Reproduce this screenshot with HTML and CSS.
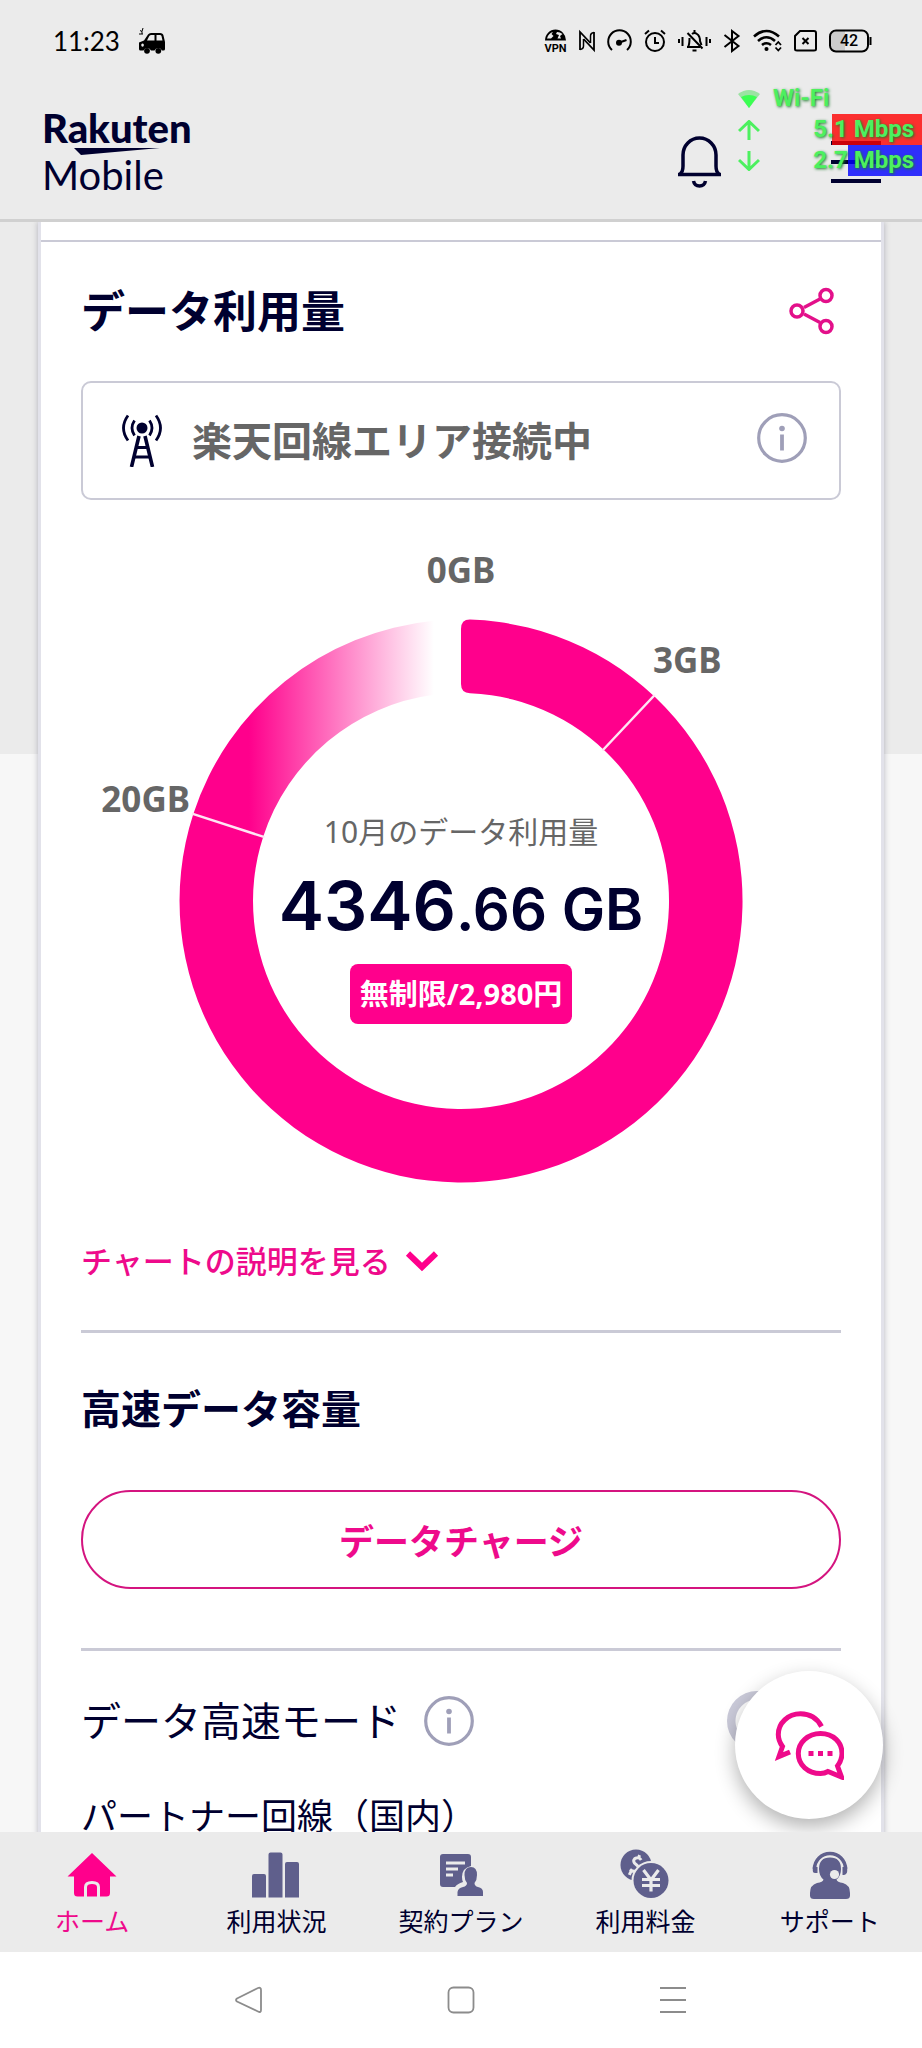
FILE: index.html
```html
<!DOCTYPE html>
<html lang="ja">
<head>
<meta charset="utf-8">
<meta name="viewport" content="width=device-width, initial-scale=1">
<title>my 楽天モバイル</title>
<link rel="stylesheet" href="styles.css">
</head>
<body>
<div class="screen">
  <div class="status">
    <time class="clock">11:23</time>
    <svg class="car" width="26" height="26" viewBox="0 0 26 26"><path fill="#000" fill-rule="evenodd" d="M0 14.500L5 12.500L9 6.500Q10 5 12 5H21Q24 5 24.500 7.500L26 14V21Q26 22.500 24.500 22.500H23A4 4 0 0 0 15.500 22.500H12A4 4 0 0 0 4.500 22.500H1.500Q0 22.500 0 21ZM8 12.500H15.500V7H12Q10.500 7 10 8.500ZM17.500 12.500H23.500L22.500 8Q22.200 7 21 7H17.500ZM3.500 15.500A1.300 1.600 0 1 0 3.600 15.500Z"/><circle cx="8" cy="22.800" r="2.900"/><circle cx="19.300" cy="22.800" r="2.900"/><path d="M0 6H4M1 2.500L3 3.500L4 0M3 3.500V6" stroke="#000" stroke-width="1" fill="none"/></svg>
    <div class="status-icons">
      <svg class="vpn-icon" width="23" height="24" viewBox="0 0 23 24"><path fill="#000" fill-rule="evenodd" d="M1 11.500A10.500 11 0 0 1 22 11.500ZM3 9.500H7L9.500 7L7.500 5L9 3Q4.500 4 3 9.500ZM13 3L12 5L15 6L13.500 9.500H17L16 7L18.500 5Q16 3 13 3Z"/><text x="11.500" y="22.500" text-anchor="middle" class="vpn">VPN</text></svg>
      <svg width="16" height="24" viewBox="0 0 16 24" fill="none" stroke="#000" stroke-width="1.800"><path d="M1 21V3L11.500 14M15 3V21L4.500 10"/><path d="M1 20.500Q4.500 20 4.500 17V10M15 3.500Q11.500 4 11.500 7V14" stroke-width="1.500"/></svg>
      <svg width="25" height="24" viewBox="0 0 25 24" fill="none" stroke="#000" stroke-width="2"><path d="M5 21A11.300 11.300 0 1 1 20 21"/><path d="M12.500 13.500L19.500 11"/><circle cx="12" cy="13.700" r="2" fill="#000"/></svg>
      <svg width="22" height="24" viewBox="0 0 22 24" fill="none" stroke="#000" stroke-width="2"><circle cx="11" cy="13" r="9"/><path d="M11 8V14H15M1 5L5 1.500M21 5L17 1.500"/></svg>
      <svg width="33" height="24" viewBox="0 0 33 24" fill="none" stroke="#000" stroke-width="2"><path d="M1 10V14M4.500 8V17M32 10V14M28.500 8V17M9 18H22M10 18Q11.500 16 11.500 9M14 5Q16.500 3 19 5Q22 7 22 12L23.500 16M16.500 1V4M9.500 4L24.500 19.500M14.500 21.500H18.500"/></svg>
      <svg width="18" height="24" viewBox="0 0 18 24" fill="none" stroke="#000" stroke-width="2"><path d="M1.500 6L15.500 17L9 22V2L15.500 7L1.500 18"/></svg>
      <svg width="29" height="24" viewBox="0 0 29 24" fill="none" stroke="#000" stroke-width="2.600"><path d="M1 7.500Q13.500-3.500 26 7.500M5 12Q13.500 4.500 22 12M9 16Q13.500 12.500 18 16"/><circle cx="13.500" cy="20" r="1.300" fill="#000" stroke-width="1.500"/><path d="M22.500 16L25.300 13L28 16M22.500 18.500L25.300 21.500L28 18.500" stroke-width="1.800"/></svg>
      <svg width="23" height="24" viewBox="0 0 23 24" fill="none" stroke="#000" stroke-width="2"><path d="M6 2H20Q22 2 22 4V20Q22 21.500 20 21.500H3Q1 21.500 1 20V7ZM8.500 9L14.500 15M14.500 9L8.500 15"/></svg>
      <svg width="43" height="24" viewBox="0 0 43 24" fill="none" stroke="#000" stroke-width="2"><path d="M6 2H16V22H6Q2 22 2 16V8Q2 2 6 2Z" fill="#ccc" stroke="none"/><rect x="1" y="1.500" width="38" height="21" rx="6"/><path d="M41.500 8V16"/><text x="20" y="17" text-anchor="middle" class="level">42</text></svg>
    </div>
  </div>

  <header class="header">
    <a class="logo" href="#" aria-label="Rakuten Mobile">
      <span class="logo-top">Rakuten</span>
      <svg class="swoosh" width="86" height="7" viewBox="0 0 86 7"><path d="M0 0H86L7 7Z" fill="#00002f"/></svg>
      <span class="logo-bottom">Mobile</span>
    </a>
    <div class="actions">
      <button class="icon-btn" aria-label="お知らせ"><svg width="45" height="52" viewBox="0 0 45 52" fill="none" stroke="#00002f" stroke-width="3.500"><path d="M1 38.500H44"/><path d="M3 38Q6 36 6 30V19A16.500 17 0 0 1 39 19V30Q39 36 42 38M16.500 45Q17.500 50 22.500 50Q27.500 50 28.500 45"/></svg></button>
      <button class="icon-btn" aria-label="メニュー"><svg width="50" height="42" viewBox="0 0 50 42" stroke="#00002f" stroke-width="4"><path d="M0 2H50M0 21H50M0 40H50"/></svg></button>
    </div>
  </header>

  <div class="meter">
    <svg width="22" height="20" viewBox="0 0 22 20"><path d="M0 5Q11-3 22 5L11 19Z" fill="#9be3a2"/><path d="M3 8Q11 4 19 8L11 19Z" fill="#3bff52"/></svg>
    <span class="meter-name">Wi-Fi</span>
    <svg width="22" height="20" viewBox="0 0 22 20" fill="none" stroke="#4cf05f" stroke-width="3"><path d="M11 20V2M1 11L11 1.500L21 11"/></svg>
    <span class="speed up">5.1 Mbps</span>
    <svg width="22" height="20" viewBox="0 0 22 20" fill="none" stroke="#4cf05f" stroke-width="3"><path d="M11 0V18M1 9L11 18.500L21 9"/></svg>
    <span class="speed down">2.7 Mbps</span>
  </div>

  <main class="content">
    <div class="card">
      <div class="strip"></div>
      <section class="body">
        <div class="title-row">
          <h1 class="title">データ利用量</h1>
          <button class="icon-btn" aria-label="共有"><svg width="52" height="52" viewBox="0 0 52 52" fill="none" stroke="#e3108a" stroke-width="3.500"><path d="M15 22.500L31 14M15 29L31 37.500"/><circle cx="8" cy="26" r="6"/><circle cx="37" cy="10.500" r="6"/><circle cx="37" cy="41.500" r="6"/></svg></button>
        </div>

        <div class="area">
          <svg width="42" height="53" viewBox="0 0 42 53" fill="none" stroke="#00002f" stroke-width="2.800"><circle cx="21" cy="14" r="5.500" fill="#00002f" stroke="none"/><path d="M18 22L10.500 53M24 22L31.500 53" stroke-width="3.600"/><path d="M16 33.500H26M13.500 43H28.500M13.500 6.500Q8.500 14 13.500 21.500M28.500 6.500Q33.500 14 28.500 21.500M7 1.500Q-2 14 7 26.500M35 1.500Q44 14 35 26.500"/></svg>
          <span class="area-text">楽天回線エリア接続中</span>
          <button class="icon-btn area-info" aria-label="接続エリアの説明"><svg width="50" height="50" viewBox="0 0 50 50"><circle cx="25" cy="25" r="23.300" fill="none" stroke="#9f9fb8" stroke-width="3.200"/><circle cx="25" cy="15.500" r="2.800" fill="#9f9fb8"/><path d="M25 21.500V37.500" stroke="#9f9fb8" stroke-width="3.800"/></svg></button>
        </div>

        <div class="chart">
          <svg class="donut" viewBox="0 0 760 640" role="img" aria-label="データ利用量チャート">
            <defs><linearGradient id="fade" gradientUnits="userSpaceOnUse" x1="168" y1="0" x2="353" y2="0"><stop offset="0" stop-color="#ff008c"/><stop offset="1" stop-color="#fff"/></linearGradient></defs>
            <path d="M112.300 269A281.500 281.500 0 0 1 353 75.800V149.800A208 208 0 0 0 182.200 291.700Z" fill="url(#fade)"/>
            <path d="M389 74.600A281.500 281.500 0 1 1 112.300 269L182.200 291.700A208 208 0 1 0 389 148.200Q380 148 380 139V84Q380 74.500 389 74.600Z" fill="#ff008c"/>
            <path d="M573.700 150L521.500 205.500M111 268.600L183.500 292.100" stroke="#ffe6f4" stroke-width="2.500"/>
            <text class="tick" x="380" y="38" text-anchor="middle">0GB</text>
            <text class="tick" x="572" y="128">3GB</text>
            <text class="tick" x="109" y="267" text-anchor="end">20GB</text>
          </svg>
          <div class="usage">
            <span class="usage-label">10月のデータ利用量</span>
            <span class="usage-value">4346<small class="usage-unit">.66 GB</small></span>
            <span class="plan">無制限/2,980円</span>
          </div>
        </div>

        <a class="more" href="#">チャートの説明を見る<svg width="34" height="22" viewBox="0 0 34 22" fill="none" stroke="#ff008c" stroke-width="6"><path d="M3 3.500L17 17L31 3.500"/></svg></a>

        <hr class="rule">
        <h2 class="subtitle">高速データ容量</h2>
        <button class="charge">データチャージ</button>
        <hr class="rule">

        <div class="mode">
          <label class="mode-label" for="fast">データ高速モード</label>
          <button class="icon-btn" aria-label="データ高速モードの説明"><svg width="50" height="50" viewBox="0 0 50 50"><circle cx="25" cy="25" r="23.300" fill="none" stroke="#9f9fb8" stroke-width="3.200"/><circle cx="25" cy="15.500" r="2.800" fill="#9f9fb8"/><path d="M25 21.500V37.500" stroke="#9f9fb8" stroke-width="3.800"/></svg></button>
          <input class="toggle" type="checkbox" id="fast">
        </div>
        <p class="partner">パートナー回線（国内）</p>
      </section>
    </div>
    <button class="chat" aria-label="チャット"><svg width="70" height="70" viewBox="0 0 70 70" fill="none" stroke="#ee0a8b" stroke-width="5"><path d="M47.500 16.500C43 8 35 3.800 26.500 3.800C14 3.800 4.300 13 4.300 24.500C4.300 29.500 6 33 8.500 36.500L5 46.500L16 42"/><path d="M46.500 23.500C59.500 23.500 68 32.500 68 43.500C68 49 66 52.500 63.500 56L67.500 67L54 61.500C52 62.700 49 63.500 46.500 63.500C34 63.500 24.300 55 24.300 43.500C24.300 32.500 34 23.500 46.500 23.500Z"/><path d="M34.500 43.500H39.500M44 43.500H49M53.500 43.500H58.500"/></svg></button>
  </main>

  <nav class="tabs">
    <a class="tab active" href="#"><svg width="50" height="50" viewBox="0 0 50 50"><path d="M25 2L49.500 25.500H43V42Q43 45.500 39.500 45.500H10.500Q7 45.500 7 42V25.500H.500Z" fill="#ff008c"/><path d="M18.500 46V36Q18.500 31.500 25 31.500Q31.500 31.500 31.500 36V46" fill="none" stroke="#ebebeb" stroke-width="3"/></svg>ホーム</a>
    <a class="tab" href="#"><svg width="50" height="50" viewBox="0 0 50 50" fill="#5f5f8c"><path d="M0 46.500V25Q0 23 2 23H12Q14 23 14 25V46.500ZM16.500 46.500V3.500Q16.500 1.500 18.500 1.500H28.500Q30.500 1.500 30.500 3.500V46.500ZM33 46.500V13Q33 11 35 11H45Q47 11 47 13V46.500Z"/></svg>利用状況</a>
    <a class="tab" href="#"><svg width="50" height="50" viewBox="0 0 50 50" fill="#5f5f8c"><path d="M7 3H32Q35 3 35 6V15Q26 17 26 26Q26 29 27 31Q21 33 19 36H7Q4 36 4 33V6Q4 3 7 3Z"/><path d="M10 12H29M10 18H22M10 24H17" stroke="#ebebeb" stroke-width="3"/><path d="M35 16Q41 16 41 24Q41 29 38.500 32Q38.500 35 42 36Q47 37 47 41V45H21.500V41Q22 37 27 36Q31 35 31 32Q28.500 29 28.500 24Q28.500 16 35 16Z"/></svg>契約プラン</a>
    <a class="tab" href="#"><svg class="coins" width="50" height="50" viewBox="0 0 50 50"><circle cx="16" cy="14" r="15.500" fill="#5f5f8c"/><path d="M20 8Q17 5 13.500 8Q11.500 11.500 16 13.500Q21 16 18.500 19Q15.500 22 11 19.500M17.500 3.500L16.700 7M12.500 21L11.500 25" transform="rotate(12 16 14)" fill="none" stroke="#ebebeb" stroke-width="3"/><circle cx="31" cy="29.500" r="19.500" fill="#ebebeb"/><circle cx="31" cy="29.500" r="17.500" fill="#5f5f8c"/><path d="M23.500 19L31 29L38.500 19M31 28V40.500M22 28.500H40M22 34.500H40" fill="none" stroke="#ebebeb" stroke-width="3.200"/></svg>利用料金</a>
    <a class="tab" href="#"><svg width="50" height="50" viewBox="0 0 50 50"><path d="M9.500 18A15.500 15.500 0 0 1 40.500 18" fill="none" stroke="#5f5f8c" stroke-width="3.500"/><path d="M7.800 16H12.500V22H10Q7.800 22 7.800 20ZM42.200 16H37.500V24H39Q42.200 23 42.200 20ZM25 6.500Q36 6.500 36 18Q36 25 31.500 28.500Q32 31 38 32Q45 34 45 42V44.500Q45 48 41 48H9Q5 48 5 44.500V42Q5 34 12 32Q18 31 18.500 28.500Q14 25 14 18Q14 6.500 25 6.500Z" fill="#5f5f8c"/><circle cx="29.500" cy="23.500" r="4.600" fill="#ebebeb"/></svg>サポート</a>
  </nav>

  <div class="system">
    <button class="icon-btn" aria-label="戻る"><svg width="30" height="30" viewBox="0 0 30 30" fill="none" stroke="#8c8c8c" stroke-width="1.800"><path d="M3 13.500L24 3Q27 2 27 5V25Q27 28 24 26.500L3 16.500Q1 15 3 13.500Z"/></svg></button>
    <button class="icon-btn" aria-label="ホーム画面"><svg width="30" height="30" viewBox="0 0 30 30" fill="none" stroke="#8c8c8c" stroke-width="1.800"><rect x="2.500" y="2.500" width="25" height="25" rx="5"/></svg></button>
    <button class="icon-btn" aria-label="アプリ履歴"><svg width="30" height="30" viewBox="0 0 30 30" fill="none" stroke="#8c8c8c" stroke-width="2"><path d="M2 3H28M2 15H28M2 27H28"/></svg></button>
  </div>
</div>
</body>
</html>
```
FILE: styles.css
```css
* { box-sizing: border-box; }

body {
  margin: 0;
  background: #fff;
  color: #00002f;
  font-family: "Noto Sans", "Noto Sans CJK JP", sans-serif;
}

button { font-family: inherit; color: inherit; }
a { color: inherit; text-decoration: none; }
svg { display: block; flex: none; }

.icon-btn {
  display: block;
  flex: none;
  padding: 0;
  border: 0;
  background: none;
}

.screen {
  position: relative;
  display: flex;
  flex-direction: column;
  height: 100vh;
  overflow: hidden;
}

/* Status bar */
.status {
  display: flex;
  align-items: center;
  flex: none;
  height: 82px;
  padding: 0 50px 0 53px;
  background: #ebebeb;
}
.clock {
  color: #000;
  font: 400 26px/40px Lato, sans-serif;
}
.car { margin-left: 19px; }
.status-icons {
  display: flex;
  align-items: center;
  gap: 12px;
  margin-left: auto;
}
.vpn-icon { overflow: visible; }
.vpn { fill: #000; stroke: none; font: 700 11px Roboto, sans-serif; }
.level { fill: #000; stroke: none; font: 500 16px Roboto, sans-serif; }

/* Header */
.header {
  display: flex;
  align-items: center;
  justify-content: space-between;
  flex: none;
  height: 140px;
  padding: 0 41px 0 42px;
  border-bottom: 3px solid #d0d0d0;
  background: #ebebeb;
}
.logo {
  display: flex;
  flex-direction: column;
  padding-top: 2px;
  font-family: Lato, sans-serif;
  font-size: 40px;
}
.logo-top { font-weight: 900; line-height: 40px; }
.logo-bottom { font-weight: 400; line-height: 40px; }
.swoosh { margin-left: 32px; }
.actions {
  display: flex;
  align-items: center;
  gap: 109px;
  padding-top: 22px;
}

/* Network speed overlay */
.meter {
  position: absolute;
  top: 83px;
  right: 0;
  display: grid;
  grid-template-columns: 35px 149px;
  grid-auto-rows: 31px;
  align-items: center;
  color: #4cf05f;
  font: 700 24px/31px Roboto, sans-serif;
  text-shadow: 1px 1px 3px #1b7a2a;
}
.speed {
  padding-right: 8px;
  text-align: right;
  background-position: right;
  background-repeat: no-repeat;
}
.up {
  background-image: linear-gradient(rgba(255, 0, 0, .8), rgba(255, 0, 0, .8));
  background-size: 90px 100%;
}
.down {
  background-image: linear-gradient(rgba(0, 0, 255, .8), rgba(0, 0, 255, .8));
  background-size: 74px 100%;
}

/* Content */
.content {
  position: relative;
  flex: 1;
  min-height: 0;
  overflow: hidden;
  background: linear-gradient(#ebebeb 532px, #f7f7f7 532px);
}
.card {
  margin: 0 38px;
  border: solid #e2e2ea;
  border-width: 0 3px;
  background: #fff;
  box-shadow: 0 0 6px rgba(0, 0, 40, .25);
}
.strip {
  height: 20px;
  border-bottom: 2px solid #cacad6;
}
.body { padding: 0 40px; }
.title-row {
  display: flex;
  align-items: center;
  justify-content: space-between;
  padding: 37px 0 38px;
}
.title { margin: 0; font-size: 44px; font-weight: 700; line-height: 64px; }
.area {
  display: flex;
  align-items: center;
  gap: 29px;
  height: 119px;
  padding: 0 32px 0 38px;
  border: 2px solid #cacad6;
  border-radius: 10px;
}
.area-text {
  flex: 1;
  color: #666;
  font-size: 40px;
  font-weight: 700;
  line-height: 60px;
}
.area-info { margin-bottom: 6px; }

.chart { display: grid; margin-top: 45px; }
.donut { grid-area: 1 / 1; width: 100%; }
.tick { fill: #666; font-size: 35px; font-weight: 700; }
.usage {
  grid-area: 1 / 1;
  align-self: center;
  display: flex;
  flex-direction: column;
  align-items: center;
  padding-top: 104px;
}
.usage-label { color: #666; font-size: 30px; line-height: 44px; }
.usage-value {
  margin-top: 7px;
  font: 600 68px/88px Inter, sans-serif;
}
.usage-unit { font-size: 58px; }
.plan {
  margin-top: 11px;
  padding: 8px 10px;
  border-radius: 8px;
  background: #ff008c;
  color: #fff;
  font-size: 29px;
  font-weight: 700;
  line-height: 44px;
}

.more {
  display: flex;
  align-items: center;
  gap: 14px;
  margin: 54px 0 47px;
  color: #ee0a8b;
  font-size: 31px;
  font-weight: 500;
  line-height: 44px;
}
.rule { height: 3px; margin: 0; border: 0; background: #cacad6; }
.subtitle { margin: 46px 0 51px; font-size: 40px; font-weight: 700; line-height: 60px; }
.charge {
  display: block;
  width: 100%;
  height: 99px;
  margin-bottom: 59px;
  border: 2px solid #d4147f;
  border-radius: 50px;
  background: #fff;
  color: #ee0a8b;
  font-size: 35px;
  font-weight: 700;
}
.mode {
  display: flex;
  align-items: center;
  gap: 23px;
  margin-top: 40px;
}
.mode-label { font-size: 40px; line-height: 60px; }
.toggle {
  appearance: none;
  width: 114px;
  height: 60px;
  margin: 0 0 0 auto;
  border-radius: 30px;
  background: radial-gradient(circle at 30px 30px, #fff 21px, #cacad9 22px);
}
.partner { margin: 39px 0 0; font-size: 36px; line-height: 54px; }

.chat {
  position: absolute;
  right: 39px;
  bottom: 13px;
  display: grid;
  place-items: center;
  width: 148px;
  height: 148px;
  padding: 0;
  border: 0;
  border-radius: 50%;
  background: #fff;
  box-shadow: 0 8px 20px rgba(0, 0, 0, .3);
}

/* Bottom navigation */
.tabs {
  display: grid;
  grid-template-columns: repeat(5, 1fr);
  flex: none;
  height: 120px;
  padding-top: 19px;
  background: #ebebeb;
}
.tab {
  display: flex;
  flex-direction: column;
  align-items: center;
  gap: 2px;
  font-size: 25px;
  line-height: 36px;
}
.coins { overflow: visible; }
.active { color: #ee0a8b; }

.system {
  display: flex;
  align-items: center;
  justify-content: center;
  gap: 182px;
  flex: none;
  height: 96px;
}
```
